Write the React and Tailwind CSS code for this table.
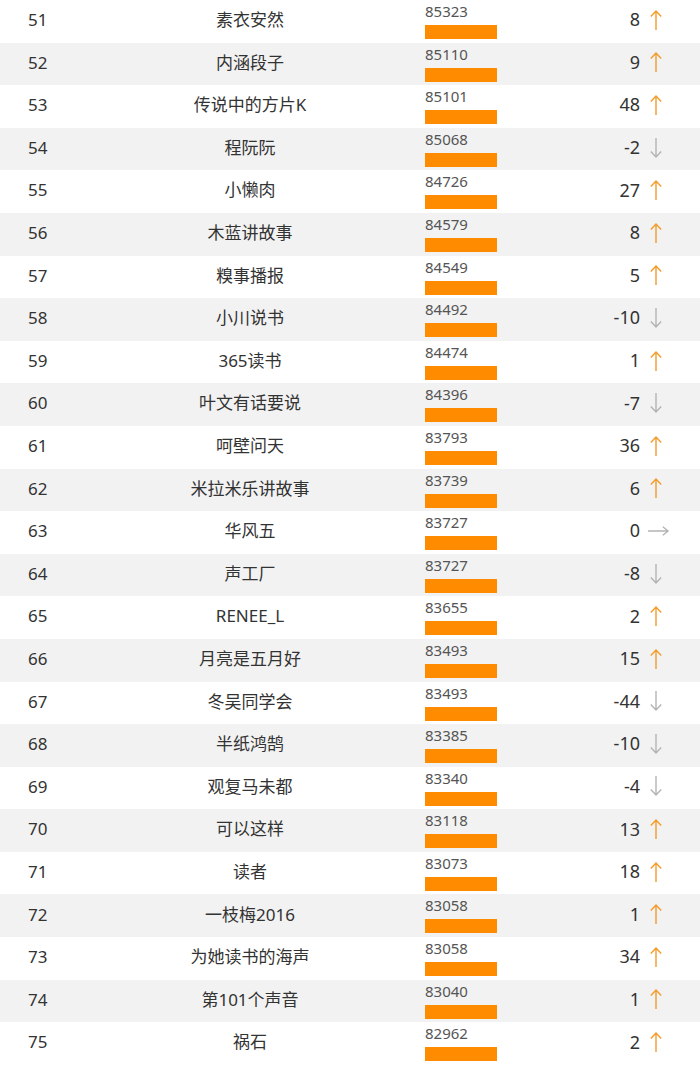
import React from 'react'

const rows = [
  [51, '素衣安然', 85323, 8],
  [52, '内涵段子', 85110, 9],
  [53, '传说中的方片K', 85101, 48],
  [54, '程阮阮', 85068, -2],
  [55, '小懒肉', 84726, 27],
  [56, '木蓝讲故事', 84579, 8],
  [57, '糗事播报', 84549, 5],
  [58, '小川说书', 84492, -10],
  [59, '365读书', 84474, 1],
  [60, '叶文有话要说', 84396, -7],
  [61, '呵壁问天', 83793, 36],
  [62, '米拉米乐讲故事', 83739, 6],
  [63, '华风五', 83727, 0],
  [64, '声工厂', 83727, -8],
  [65, 'RENEE_L', 83655, 2],
  [66, '月亮是五月好', 83493, 15],
  [67, '冬吴同学会', 83493, -44],
  [68, '半纸鸿鹄', 83385, -10],
  [69, '观复马未都', 83340, -4],
  [70, '可以这样', 83118, 13],
  [71, '读者', 83073, 18],
  [72, '一枝梅2016', 83058, 1],
  [73, '为她读书的海声', 83058, 34],
  [74, '第101个声音', 83040, 1],
  [75, '祸石', 82962, 2],
]

const Arrow = ({ change }) => {
  if (change > 0) {
    return (
      <svg width="14" height="22" viewBox="0 0 14 22" className="text-[#f39c2b]">
        <path d="M7 2v19M1.8 7.5L7 2l5.2 5.5" fill="none" stroke="currentColor" strokeWidth="1.4" />
      </svg>
    )
  }
  if (change < 0) {
    return (
      <svg width="14" height="22" viewBox="0 0 14 22" className="text-[#b4b4b4]">
        <path d="M7 1v19M1.8 14.5L7 20l5.2-5.5" fill="none" stroke="currentColor" strokeWidth="1.4" />
      </svg>
    )
  }
  return (
    <svg width="24" height="14" viewBox="0 0 24 14" className="text-[#b4b4b4] ml-[-2px]">
      <path d="M1 7h21M16.5 2.5L22 7l-5.5 4.5" fill="none" stroke="currentColor" strokeWidth="1.4" />
    </svg>
  )
}

const App = () => {
  return (
    <div
      className="w-[700px] bg-white text-[#333]"
      style={{ fontFamily: '"Noto Sans", "Noto Sans CJK SC", sans-serif' }}
    >
      {rows.map(([rank, name, score, change], i) => (
        <div
          key={rank}
          className={`flex items-center h-[42.6px] ${i % 2 === 1 ? 'bg-[#f2f2f2]' : 'bg-white'}`}
        >
          <div className="w-[140px] pl-[28px] pb-[3px] text-[17px]">{rank}</div>
          <div className="w-[220px] pb-[3px] text-center text-[17px]">{name}</div>
          <div className="w-[140px] pl-[65px] self-stretch flex flex-col pt-[2px]">
            <span className="text-[15px] leading-[18px] text-[#555]">{score}</span>
            <div className="mt-[5px] h-[14px] w-[72px] bg-[#ff8c00]" />
          </div>
          <div className="w-[140px] pb-[3px] text-right text-[18px]">{change}</div>
          <div className="w-[30px] pl-[9px] pb-[3px] flex items-center">
            <Arrow change={change} />
          </div>
        </div>
      ))}
    </div>
  )
}

export default App
